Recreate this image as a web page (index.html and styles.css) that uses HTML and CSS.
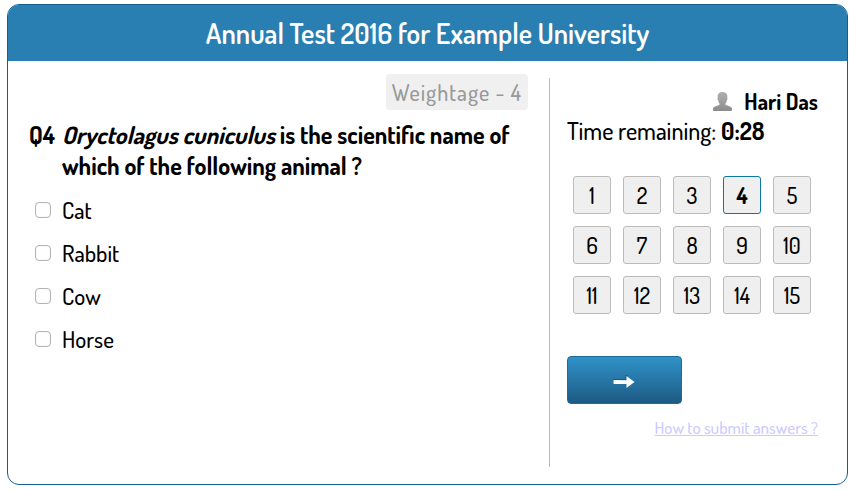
FILE: index.html
```html
<!DOCTYPE html>
<html lang="en">
<head>
    <meta charset="UTF-8">
    <meta name="viewport" content="width=device-width, initial-scale=1.0">
    <title>Annual Test 2016</title>
    <link rel="stylesheet" href="styles.css">
</head>
<body>
    <div class="test">
        <header class="header">
            <h1 class="title">Annual Test 2016 for Example University</h1>
        </header>
        <div class="content">
            <main class="question-panel">
                <div class="weightage">Weightage - 4</div>
                <form class="question-form" id="question">
                    <h2 class="question">
                        <span class="question-no">Q4</span>
                        <span class="question-text"><em>Oryctolagus cuniculus</em> is the scientific name of which of the following animal ?</span>
                    </h2>
                    <ul class="options">
                        <li><label class="option"><input type="checkbox" name="answer" value="cat">Cat</label></li>
                        <li><label class="option"><input type="checkbox" name="answer" value="rabbit">Rabbit</label></li>
                        <li><label class="option"><input type="checkbox" name="answer" value="cow">Cow</label></li>
                        <li><label class="option"><input type="checkbox" name="answer" value="horse">Horse</label></li>
                    </ul>
                </form>
            </main>
            <aside class="sidebar">
                <div class="user">
                    <svg class="user-icon" viewBox="0 0 19 19" width="19" height="19" aria-hidden="true">
                        <defs>
                            <linearGradient id="user-fill" x1="0" y1="0" x2="0" y2="1">
                                <stop offset="0" stop-color="#b0b0b0"/>
                                <stop offset="1" stop-color="#8c8c8c"/>
                            </linearGradient>
                        </defs>
                        <path fill="url(#user-fill)" d="M9.500 0C6.300 0 4.600 1.900 4.600 4.600c0 .6.100 1.100.2 1.500-.5.200-.4 1.800.4 2.500.2 1.300.7 2.200 1.400 2.800 0 1.100-.2 1.500-1.100 1.900L2 14.500C.6 15.100 0 15.900 0 17.300V18q0 1 1 1h17q1 0 1-1v-.7c0-1.400-.6-2.200-2-2.800l-3.500-1.200c-.9-.4-1.100-.8-1.100-1.900.7-.6 1.200-1.500 1.400-2.800.8-.7.900-2.300.4-2.500.1-.4.200-.9.200-1.500C14.400 1.900 12.700 0 9.500 0z"/>
                    </svg>
                    <span class="user-name">Hari Das</span>
                </div>
                <p class="timer">Time remaining: <strong>0:28</strong></p>
                <nav class="numbers">
                    <button class="number" type="button">1</button>
                    <button class="number" type="button">2</button>
                    <button class="number" type="button">3</button>
                    <button class="number active" type="button">4</button>
                    <button class="number" type="button">5</button>
                    <button class="number" type="button">6</button>
                    <button class="number" type="button">7</button>
                    <button class="number" type="button">8</button>
                    <button class="number" type="button">9</button>
                    <button class="number" type="button">10</button>
                    <button class="number" type="button">11</button>
                    <button class="number" type="button">12</button>
                    <button class="number" type="button">13</button>
                    <button class="number" type="button">14</button>
                    <button class="number" type="button">15</button>
                </nav>
                <button class="next" type="submit" form="question" aria-label="Next">
                    <svg viewBox="0 0 24 18" width="24" height="18" aria-hidden="true">
                        <path fill="#124a70" d="M0 8h12.500V4h2v5H1v4H0z" opacity=".6"/>
                        <path fill="#fff" d="M.5 9l13 .3V5l8 6-8 6v-4H.5z"/>
                    </svg>
                </button>
                <a class="help" href="#">How to submit answers ?</a>
            </aside>
        </div>
    </div>
</body>
</html>
```
FILE: styles.css
```css
* {
    margin: 0;
    padding: 0;
    box-sizing: border-box;
}

body {
    display: flex;
    min-height: 100vh;
    padding: 4px 4px 5px 7px;
    font-family: Dosis, "Liberation Sans Narrow", "Lato", sans-serif;
    font-size: 24px;
    font-weight: 500;
    color: #000;
    background-color: #fff;
}

.test {
    flex: 1;
    display: flex;
    flex-direction: column;
    border: 1px solid #12608f;
    border-radius: 12px;
    overflow: hidden;
}

.header {
    padding: 10px;
    background-color: #297fb1;
}

.title {
    font-size: 28px;
    line-height: 36px;
    font-weight: 600;
    text-align: center;
    color: #fff;
}

.content {
    flex: 1;
    display: flex;
    padding-bottom: 17px;
}

/* question */
.question-panel {
    flex: 1;
    display: flex;
    flex-direction: column;
    padding: 13px 21px 0;
}

.weightage {
    align-self: flex-end;
    padding: 0 6px;
    border-radius: 4px;
    font-size: 22px;
    line-height: 36px;
    font-weight: 500;
    letter-spacing: 1px;
    color: #999;
    background-color: #f0f0f0;
}

.question {
    display: flex;
    margin-top: 9px;
    font-size: 24px;
    line-height: 31px;
}

.question-no {
    flex: 0 0 33px;
}

.options {
    margin: 7px 0 0 6px;
    list-style: none;
}

.option {
    display: flex;
    align-items: center;
    gap: 11px;
    height: 43px;
    font-size: 23px;
}

.option input {
    appearance: none;
    width: 16px;
    height: 16px;
    border: 1px solid #b4b4b4;
    border-radius: 4px;
    background-color: #fff;
    box-shadow: inset 0 0 1px #ccc;
}

.option input:checked {
    background-color: #297fb1;
}

/* sidebar */
.sidebar {
    flex: 0 0 298px;
    display: flex;
    flex-direction: column;
    margin-top: 17px;
    padding: 8px 29px 0 17px;
    border-left: 1px solid #bbb;
}

.user {
    display: flex;
    justify-content: flex-end;
    align-items: center;
    gap: 12px;
    font-size: 22px;
    line-height: 30px;
    font-weight: 700;
}

.timer {
    line-height: 30px;
}

.numbers {
    display: grid;
    grid-template-columns: repeat(5, 38px);
    gap: 12px;
    margin: 30px 6px 42px;
}

.number {
    height: 38px;
    border: 1px solid #bbb;
    border-radius: 3px;
    font-family: inherit;
    font-size: 22px;
    font-weight: 500;
    color: #000;
    background-color: #efefef;
    cursor: pointer;
}

.number.active {
    border-color: #0b76a8;
    font-weight: 700;
}

.next {
    display: flex;
    justify-content: center;
    align-items: center;
    width: 115px;
    height: 48px;
    border: 1px solid #1f6a96;
    border-radius: 4px;
    background: linear-gradient(#3093c9, #1d5a84);
    cursor: pointer;
}

.help {
    align-self: flex-end;
    margin-top: 14px;
    font-size: 17px;
    line-height: 20px;
    color: #ccccff;
}
```
